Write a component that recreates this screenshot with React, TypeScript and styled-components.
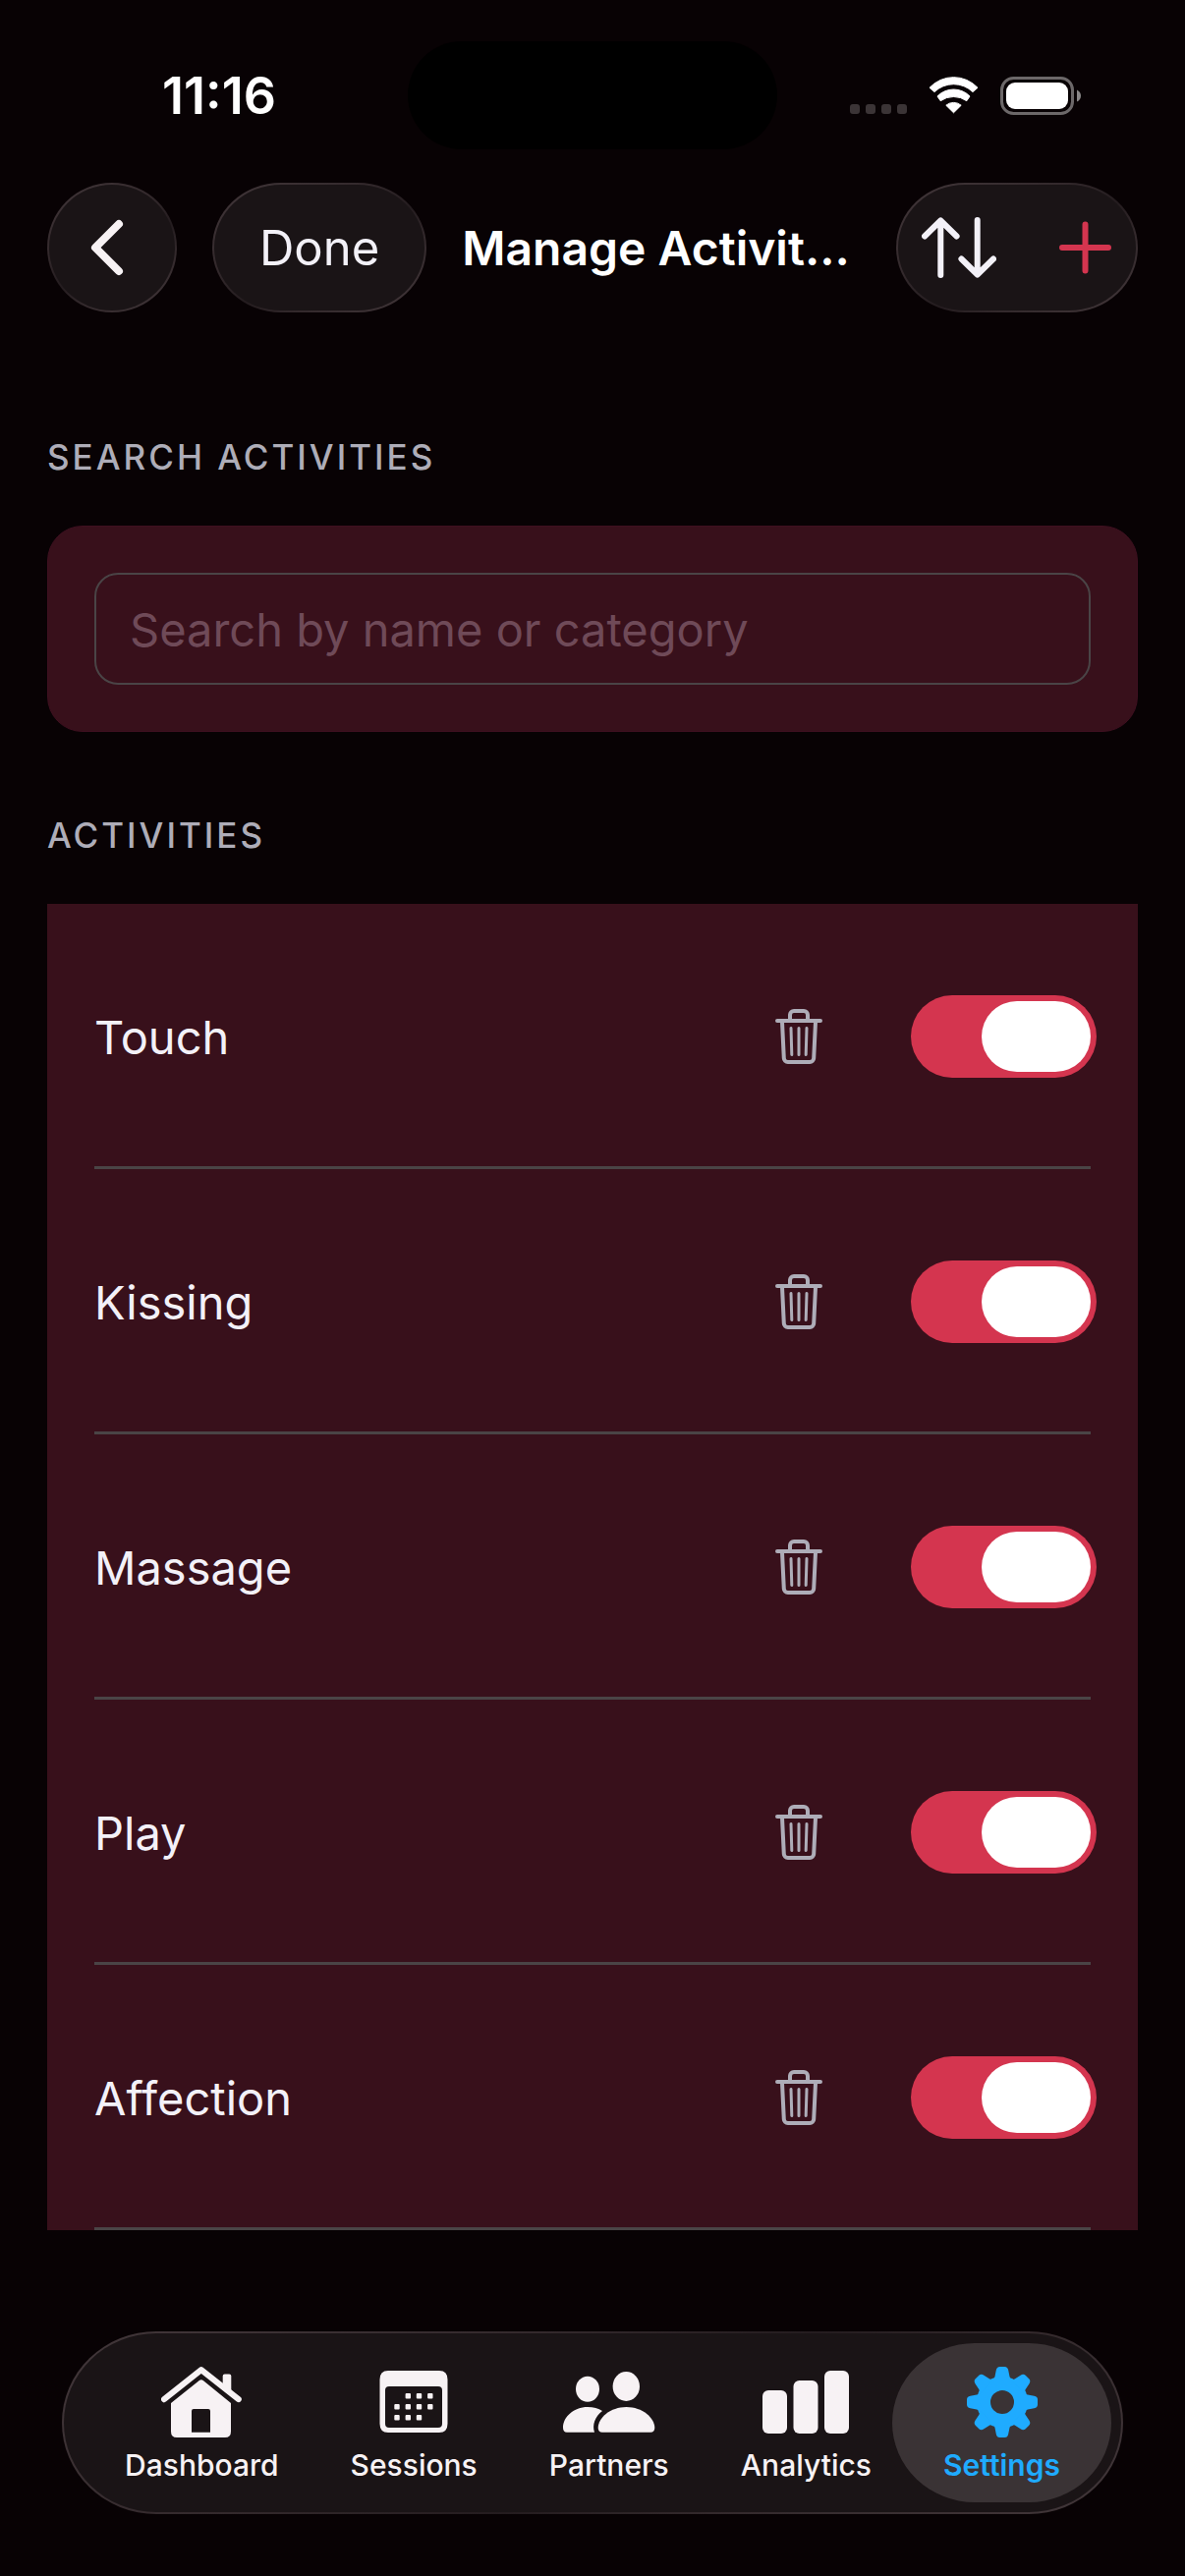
import { useState } from "react";
import styled, { createGlobalStyle, css } from "styled-components";

const color = {
  page: "#080204",
  card: "#38101b",
  cardEdge: "#3e1020",
  glass: "#1a1416",
  glassActive: "#3a3335",
  line: "#4a4446",
  text: "#f3f1f8",
  heading: "#aeadb8",
  placeholder: "#6f4a58",
  tab: "#f7f2f4",
  accent: "#d4354f",
  active: "#1fabff",
};

const GlobalStyle = createGlobalStyle`
  *, *::before, *::after { box-sizing: border-box; }
  body {
    margin: 0;
    background: ${color.page};
    color: ${color.text};
    font-family: Inter, "Liberation Sans", sans-serif;
    -webkit-font-smoothing: antialiased;
  }
  button, input { font: inherit; color: inherit; }
`;

const glass = css`
  border: 2px solid transparent;
  background:
    linear-gradient(${color.glass}, ${color.glass}) padding-box,
    linear-gradient(150deg, #42373a, #33292c 35%, #241c1f 55%, #33292c 70%, #42373a) border-box;
`;

const Screen = styled.div`
  display: flex;
  flex-direction: column;
  min-height: 100vh;
`;

const StatusBar = styled.div`
  display: grid;
  grid-template-columns: 1fr 376px 1fr;
  align-items: center;
  justify-items: center;
  padding: 42px 31px 0;
`;

const Time = styled.span`
  padding-top: 2px;
  color: #fff;
  font-size: 52px;
  font-weight: 600;
  line-height: 60px;
`;

const Island = styled.div`
  width: 100%;
  height: 110px;
  border-radius: 55px;
  background: #000;
`;

const StatusIcons = styled.div`
  display: flex;
  align-items: center;
  gap: 22px;
`;

const Toolbar = styled.header`
  display: flex;
  align-items: center;
  gap: 36px;
  height: 132px;
  margin-top: 34px;
  padding: 0 48px;
`;

const BackButton = styled.button`
  ${glass}
  display: grid;
  place-items: center;
  flex: none;
  width: 132px;
  height: 132px;
  padding: 0;
  border-radius: 66px;
`;

const DoneButton = styled.button`
  ${glass}
  flex: none;
  height: 132px;
  padding: 2px 46px 0;
  border-radius: 70px / 66px;
  font-size: 49px;
  line-height: 60px;
`;

const Title = styled.h1`
  flex: 1;
  min-width: 0;
  margin: 0;
  padding-top: 2px;
  overflow: hidden;
  color: #fff;
  font-size: 48px;
  font-weight: 600;
  line-height: 60px;
  white-space: nowrap;
`;

const ActionGroup = styled.div`
  ${glass}
  display: flex;
  align-items: stretch;
  justify-content: space-between;
  flex: none;
  width: 246px;
  height: 132px;
  padding: 0 24px;
  border-radius: 70px / 66px;
`;

const ActionButton = styled.button<{ $tint: string }>`
  display: grid;
  place-items: center;
  padding: 0;
  border: 0;
  background: none;
  color: ${(p) => p.$tint};
`;

const Content = styled.main`
  padding: 41px 48px 0;
`;

const SectionHeading = styled.h2`
  margin: 84px 0 48px;
  color: ${color.heading};
  font-size: 35px;
  font-weight: 500;
  letter-spacing: 3px;
  line-height: 44px;
  text-transform: uppercase;
`;

const SearchCard = styled.div`
  padding: 47px;
  border: 1px solid ${color.cardEdge};
  border-radius: 36px;
  background: ${color.card};

  & + ${SectionHeading} {
    margin-top: 83px;
  }
`;

const SearchField = styled.input`
  display: block;
  width: 100%;
  height: 114px;
  padding: 0 34px;
  border: 2px solid ${color.line};
  border-radius: 24px;
  outline: none;
  background: transparent;
  font-size: 47px;

  &::placeholder {
    color: ${color.placeholder};
    opacity: 1;
  }
`;

const ActivityList = styled.ul`
  margin: 0;
  padding: 0 48px;
  background: ${color.card};
  list-style: none;
`;

const ActivityItem = styled.li`
  padding-top: 3px;
  border-bottom: 3px solid ${color.line};
`;

const ActivityRow = styled.div`
  display: flex;
  align-items: center;
  gap: 90px;
  height: 264px;
  margin-right: -6px;
`;

const ActivityName = styled.label`
  flex: 1;
  padding-top: 2px;
  font-size: 47px;
  line-height: 60px;
`;

const DeleteButton = styled.button`
  display: grid;
  padding: 0;
  border: 0;
  background: none;
  color: ${color.heading};
`;

const Toggle = styled.input`
  appearance: none;
  display: grid;
  flex: none;
  width: 189px;
  height: 84px;
  margin: 0;
  padding: 6px;
  border-radius: 42px;
  background: ${color.line};

  &::before {
    content: "";
    width: 111px;
    height: 72px;
    border-radius: 36px;
    background: #fff;
  }

  &:checked {
    justify-content: end;
    background: ${color.accent};
  }
`;

const TabBar = styled.nav`
  ${glass}
  display: flex;
  margin: auto 63px 63px;
  padding: 10px;
  border-radius: 96px / 93px;
`;

const Tab = styled.a<{ $active: boolean }>`
  display: flex;
  flex: 1 0 auto;
  flex-direction: column;
  align-items: center;
  gap: 10px;
  padding: 24px 51px 20px;
  border-radius: 84px / 81px;
  background: ${(p) => (p.$active ? color.glassActive : "transparent")};
  color: ${(p) => (p.$active ? color.active : color.tab)};
  font-size: 30px;
  font-weight: ${(p) => (p.$active ? 600 : 500)};
  line-height: 36px;
  text-decoration: none;
  white-space: nowrap;

  & + & {
    margin-left: -31px;
  }
`;

const TabIcon = styled.span`
  display: grid;
  place-items: center;
  height: 72px;
`;

const SignalDots = () => (
  <svg width="58" height="38" viewBox="0 0 58 38" fill="#3b3436" aria-hidden="true">
    {[0, 16, 32, 48].map((x) => (
      <rect key={x} x={x} y="28" width="10" height="10" rx="3" />
    ))}
  </svg>
);

const WifiIcon = () => (
  <svg width="51" height="38" viewBox="0 0 51 38" fill="#fff" aria-hidden="true">
    <g stroke="#fff" strokeWidth="1" strokeLinejoin="round">
      <path d="M1 11.3A33.5 33.5 0 0 1 50 11.3L45 15.6A28 28 0 0 0 6 15.6Z" />
      <path d="M9 20A23 23 0 0 1 42 20L38.8 24.7A23 23 0 0 0 12.2 24.7Z" />
      <path d="M17.8 29.2A12 12 0 0 1 33.2 29.2L25.5 36.8Z" />
    </g>
  </svg>
);

const BatteryIcon = () => (
  <svg width="84" height="39" viewBox="0 0 84 39" aria-hidden="true">
    <rect x="1.5" y="1.5" width="72" height="36" rx="12" fill="none" stroke="#6c6869" strokeWidth="3" />
    <rect x="6" y="6" width="63" height="27" rx="9" fill="#fff" />
    <path d="M78 13.5q4 2 4 6t-4 6z" fill="#8a8788" />
  </svg>
);

const ChevronIcon = () => (
  <svg width="44" height="58" viewBox="0 0 44 58" fill="none" stroke={color.tab} strokeWidth="8" strokeLinecap="round" strokeLinejoin="round" aria-hidden="true">
    <path d="M29 5L5 29L29 53" />
  </svg>
);

const SortIcon = () => (
  <svg width="76" height="62" viewBox="0 0 76 62" fill="none" stroke="currentColor" strokeWidth="6" strokeLinecap="round" strokeLinejoin="round" aria-hidden="true">
    <path d="M3 19.5L19.3 3.5L35.6 19.5M19.3 4V59M40.4 42.5L56.7 58.5L73 42.5M56.7 58V3" />
  </svg>
);

const PlusIcon = () => (
  <svg width="54" height="54" viewBox="0 0 54 54" fill="none" stroke="currentColor" strokeWidth="6" strokeLinecap="round" aria-hidden="true">
    <path d="M26.5 3.5V50.5M3 27H50" />
  </svg>
);

const TrashIcon = () => (
  <svg width="48" height="56" viewBox="0 0 48 56" fill="none" stroke="currentColor" strokeLinecap="round" strokeLinejoin="round" aria-hidden="true">
    <path strokeWidth="4" d="M2 12H46M15 11V6a4 4 0 0 1 4-4h10a4 4 0 0 1 4 4v5M7 13l1.8 37.2a4 4 0 0 0 4 3.8h22.4a4 4 0 0 0 4-3.8L41 13" />
    <path strokeWidth="3" d="M16 19.5L16.8 46.5M24 19.5V46.5M32 19.5L31.2 46.5" />
  </svg>
);

const HomeIcon = () => (
  <svg width="82" height="72" viewBox="0 0 82 72" fill="currentColor" aria-hidden="true">
    <path d="M3 33.2L40.8 3.2L78.8 33.2" fill="none" stroke="currentColor" strokeWidth="6" strokeLinecap="round" strokeLinejoin="round" />
    <path d="M62.7 21V9.5q0-2 2-2h4.6q2 0 2 2V28z" />
    <path fillRule="evenodd" d="M10 37L38.8 14Q40.8 12.4 42.8 14L71 37V66q0 6-6 6H16q-6 0-6-6ZM33 43q-2 0-2 2V66.7H50V45q0-2-2-2Z" />
  </svg>
);

const calendarDots = [
  [29.3, 25.7], [40.5, 25.7], [51.8, 25.7],
  [18, 36.7], [29.3, 36.7], [40.5, 36.7], [51.8, 36.7],
  [18, 47.7], [29.3, 47.7], [40.5, 47.7],
];

const CalendarIcon = () => (
  <svg width="70" height="64" viewBox="0 0 70 64" fill="currentColor" aria-hidden="true">
    <path fillRule="evenodd" d="M9 0H61q8.5 0 8.5 9V54q0 9-8.5 9H9q-8.5 0-8.5-9V9q0-9 8.5-9ZM10 16q-4 0-4 4V54q0 4 4 4H60q4 0 4-4V20q0-4-4-4Z" />
    {calendarDots.map(([x, y]) => (
      <rect key={`${x}-${y}`} x={x - 2.7} y={y - 2.7} width="5.4" height="5.4" rx="1" />
    ))}
  </svg>
);

const PeopleIcon = () => (
  <svg width="94" height="62" viewBox="0 0 94 62" fill="currentColor" aria-hidden="true">
    <ellipse cx="25" cy="17.7" rx="12" ry="13" />
    <ellipse cx="64.3" cy="15" rx="13.7" ry="15" />
    <path d="M4 61.7Q0 61.7 0 57C0 46 11 36 25 36C31 36 36 37.2 40 40C32.5 46 29.5 54 32 61.7Z" />
    <path d="M40 61.7Q35.7 61.7 35.7 57C36 47 48 36 64.5 36C81 36 93 47 93.3 57Q93.3 61.7 89 61.7Z" />
  </svg>
);

const BarsIcon = () => (
  <svg width="88" height="64" viewBox="0 0 88 64" fill="currentColor" aria-hidden="true">
    <rect x="0" y="20" width="25" height="44" rx="6" />
    <rect x="31.5" y="10" width="25" height="54" rx="6" />
    <rect x="63" y="0" width="25" height="64" rx="6" />
  </svg>
);

const GearIcon = () => (
  <svg width="72" height="72" viewBox="0 0 72 72" fill="currentColor" aria-hidden="true">
    <circle cx="36" cy="36" r="19" fill="none" stroke="currentColor" strokeWidth="14" />
    {[0, 45, 90, 135, 180, 225, 270, 315].map((angle) => (
      <path
        key={angle}
        transform={`rotate(${angle} 36 36)`}
        d="M25.5 14Q28 12.5 28.5 10L29.8 3.5Q30.5 0 33.5 0H38.5Q41.5 0 42.2 3.5L43.5 10Q44 12.5 46.5 14Z"
      />
    ))}
  </svg>
);

const tabs = [
  { name: "Dashboard", Icon: HomeIcon },
  { name: "Sessions", Icon: CalendarIcon },
  { name: "Partners", Icon: PeopleIcon },
  { name: "Analytics", Icon: BarsIcon },
  { name: "Settings", Icon: GearIcon },
];

const activities = ["Touch", "Kissing", "Massage", "Play", "Affection"];

export default function App() {
  const [query, setQuery] = useState("");
  const [disabled, setDisabled] = useState<string[]>([]);
  const [removed, setRemoved] = useState<string[]>([]);
  const [activeTab, setActiveTab] = useState("Settings");

  const visible = activities.filter(
    (name) => !removed.includes(name) && name.toLowerCase().includes(query.toLowerCase()),
  );

  const toggle = (name: string) =>
    setDisabled((list) => (list.includes(name) ? list.filter((n) => n !== name) : [...list, name]));

  return (
    <>
      <GlobalStyle />
      <Screen>
        <StatusBar>
          <Time>11:16</Time>
          <Island />
          <StatusIcons>
            <SignalDots />
            <WifiIcon />
            <BatteryIcon />
          </StatusIcons>
        </StatusBar>

        <Toolbar>
          <BackButton type="button" aria-label="Back">
            <ChevronIcon />
          </BackButton>
          <DoneButton type="button">Done</DoneButton>
          <Title>Manage Activit...</Title>
          <ActionGroup>
            <ActionButton type="button" aria-label="Sort" $tint={color.text}>
              <SortIcon />
            </ActionButton>
            <ActionButton type="button" aria-label="Add activity" $tint={color.accent}>
              <PlusIcon />
            </ActionButton>
          </ActionGroup>
        </Toolbar>

        <Content>
          <SectionHeading>
            <label htmlFor="activity-search">Search Activities</label>
          </SectionHeading>
          <SearchCard>
            <SearchField
              id="activity-search"
              type="text"
              placeholder="Search by name or category"
              value={query}
              onChange={(e) => setQuery(e.target.value)}
            />
          </SearchCard>

          <SectionHeading>Activities</SectionHeading>
          <ActivityList>
            {visible.map((name) => (
              <ActivityItem key={name}>
                <ActivityRow>
                  <ActivityName htmlFor={`toggle-${name}`}>{name}</ActivityName>
                  <DeleteButton
                    type="button"
                    aria-label={`Delete ${name}`}
                    onClick={() => setRemoved((list) => [...list, name])}
                  >
                    <TrashIcon />
                  </DeleteButton>
                  <Toggle
                    id={`toggle-${name}`}
                    type="checkbox"
                    role="switch"
                    checked={!disabled.includes(name)}
                    onChange={() => toggle(name)}
                  />
                </ActivityRow>
              </ActivityItem>
            ))}
          </ActivityList>
        </Content>

        <TabBar aria-label="Main">
          {tabs.map(({ name, Icon }) => (
            <Tab
              key={name}
              href={`#${name.toLowerCase()}`}
              $active={name === activeTab}
              aria-current={name === activeTab ? "page" : undefined}
              onClick={() => setActiveTab(name)}
            >
              <TabIcon>
                <Icon />
              </TabIcon>
              {name}
            </Tab>
          ))}
        </TabBar>
      </Screen>
    </>
  );
}
